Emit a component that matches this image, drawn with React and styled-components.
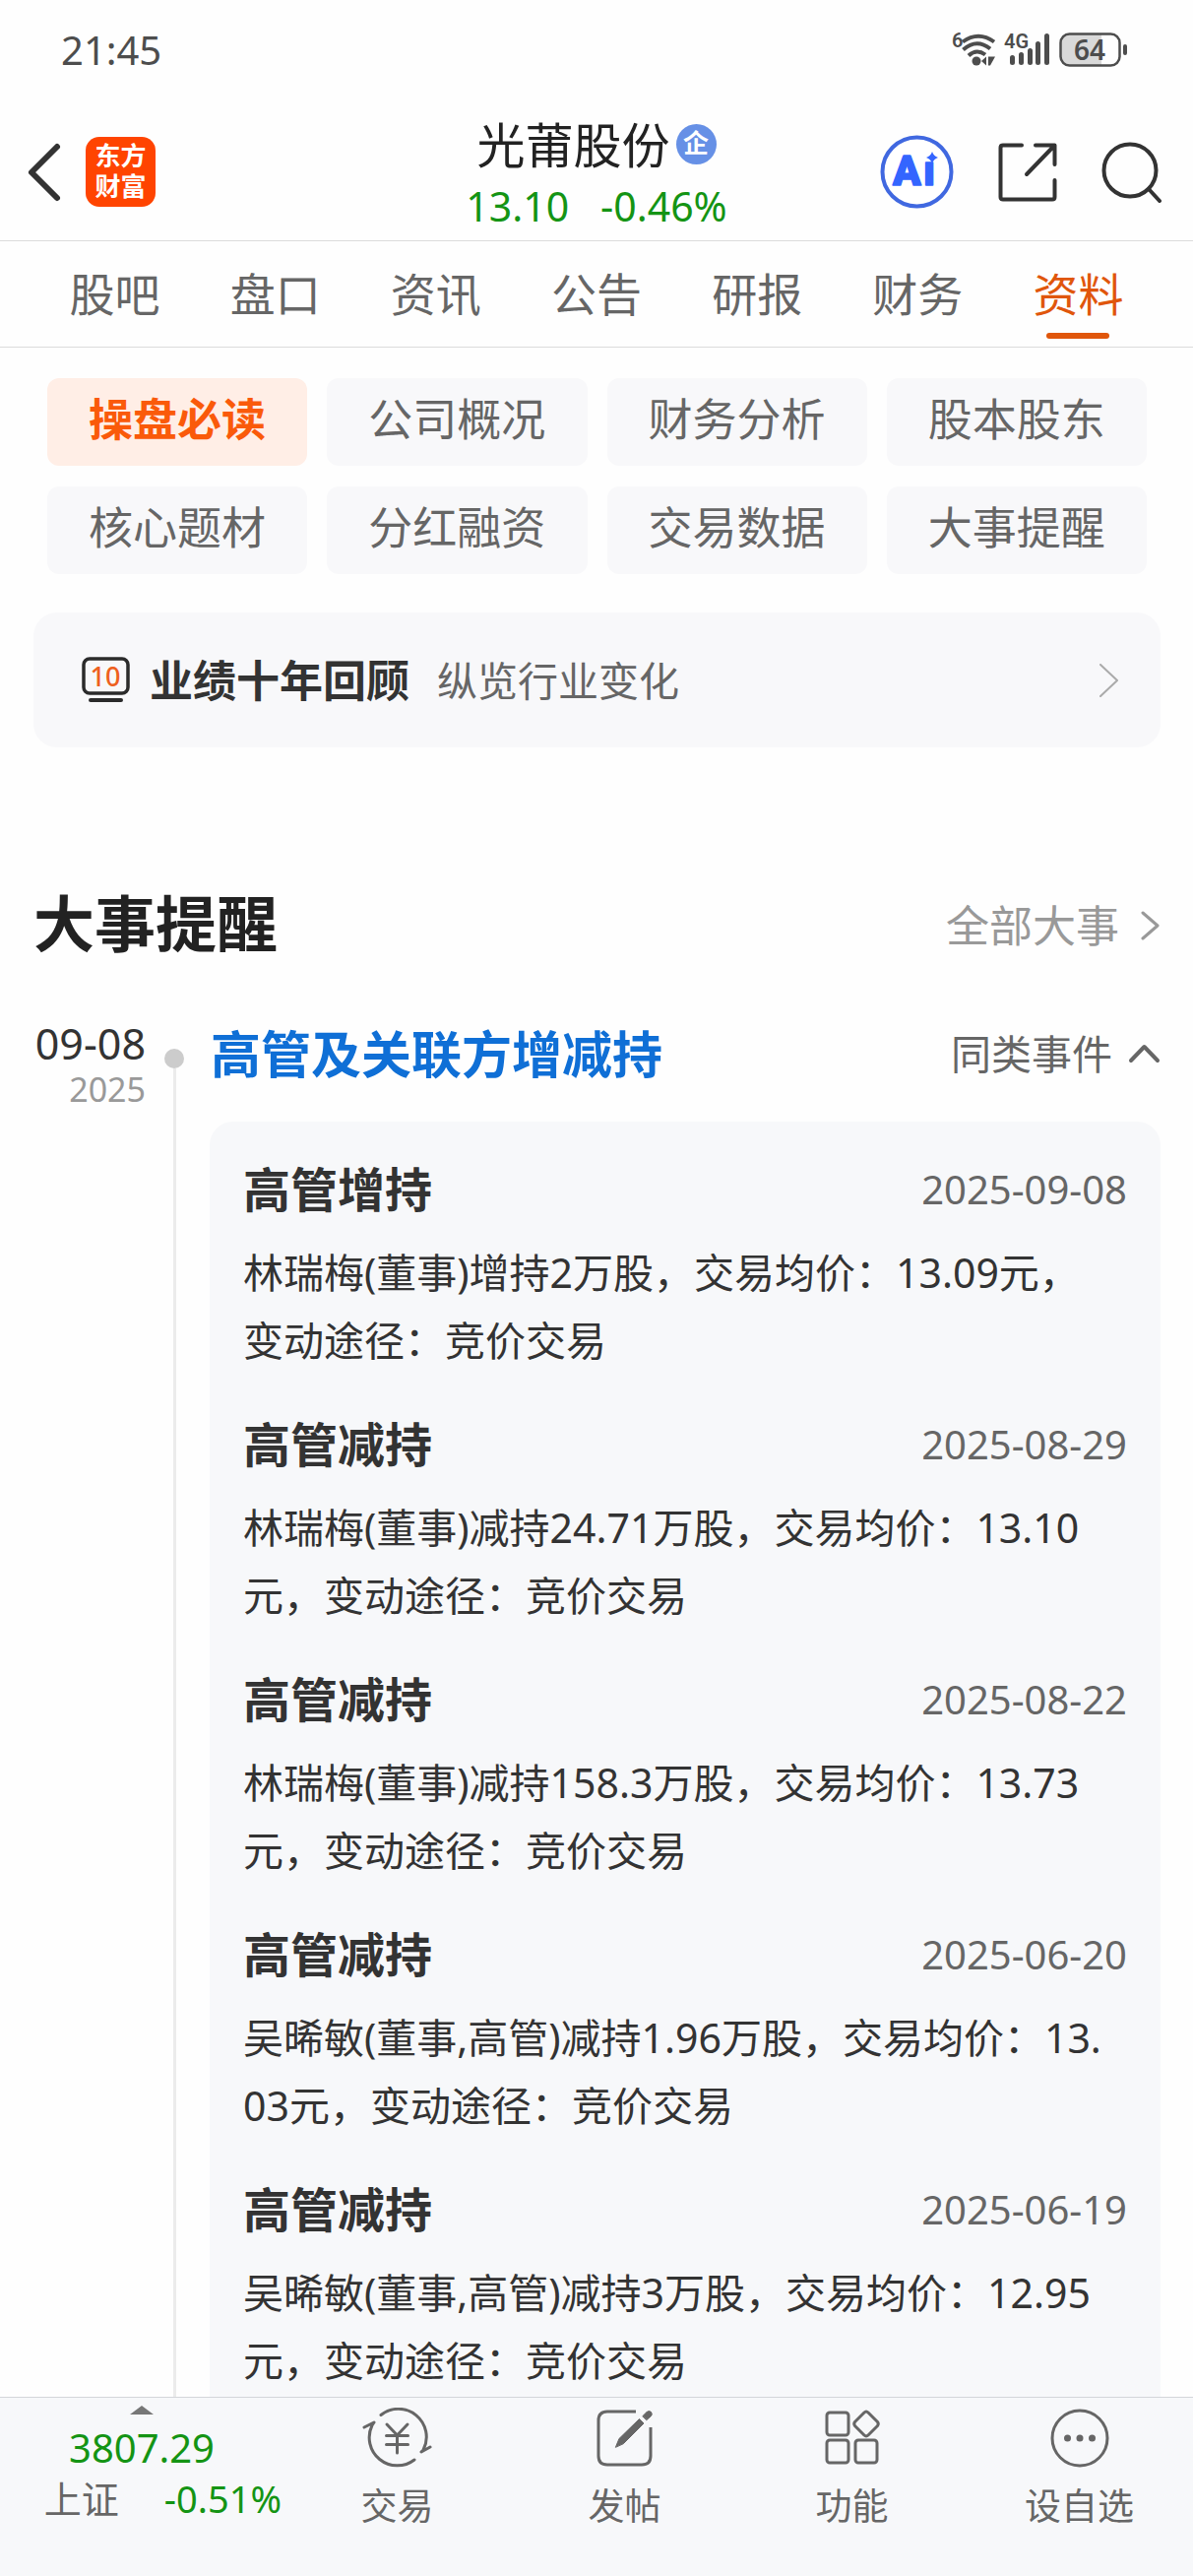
import styled, { createGlobalStyle } from "styled-components";

const GlobalStyle = createGlobalStyle`
  * {
    box-sizing: border-box;
  }
  body {
    margin: 0;
    background: #fefefe;
    color: #333;
    font-family: "Noto Sans", "Noto Sans CJK SC", sans-serif;
  }
  h1, h2, h3, p {
    margin: 0;
  }
  button {
    border: 0;
    padding: 0;
    background: none;
    color: inherit;
    font: inherit;
    cursor: pointer;
  }
  a {
    color: inherit;
    text-decoration: none;
  }
  svg {
    display: block;
    flex: none;
  }
`;

const Page = styled.div`
  height: 100vh;
  display: flex;
  flex-direction: column;
`;

const StatusBar = styled.div`
  height: 101px;
  flex: none;
  display: flex;
  align-items: center;
  justify-content: space-between;
  padding: 0 66px 0 62px;
  color: #4d4d4d;
`;
const Clock = styled.span`
  font-size: 40px;
  line-height: 48px;
`;
const StatusIcons = styled.div`
  display: flex;
  align-items: center;
  gap: 8px;
`;

const TopBar = styled.header`
  height: 144px;
  flex: none;
  display: grid;
  grid-template-columns: 1fr auto 1fr;
  align-items: center;
  padding: 4px 31px 0 27px;
  border-bottom: 1px solid #dcdcdc;
  color: #333;
`;
const TopGroup = styled.div`
  display: flex;
  align-items: center;
  gap: ${(props) => props.$gap}px;
  justify-content: ${(props) => (props.$end ? "flex-end" : "flex-start")};
`;
const BrandLogo = styled.a`
  width: 71px;
  height: 71px;
  border-radius: 14px;
  background: #ff4400;
  color: #fff;
  font-size: 26px;
  font-weight: 700;
  line-height: 31px;
  text-align: center;
  padding: 4px 8px;
  word-break: break-all;
`;
const StockTitle = styled.div`
  display: flex;
  flex-direction: column;
  align-items: center;
  padding: 4px 0 0 4px;
`;
const StockName = styled.h1`
  display: flex;
  align-items: center;
  gap: 6px;
  color: #222;
  font-size: 49px;
  font-weight: 400;
  line-height: 64px;
`;
const Badge = styled.span`
  width: 41px;
  height: 41px;
  border-radius: 50%;
  background: #6690e6;
  color: #fff;
  font-size: 26px;
  font-weight: 700;
  line-height: 38px;
  text-align: center;
`;
const StockPrice = styled.div`
  display: flex;
  gap: 32px;
  color: #149414;
  font-size: 41px;
  line-height: 60px;
`;

const Tabs = styled.nav`
  height: 108px;
  flex: none;
  display: flex;
  padding: 0 35px;
  border-bottom: 1px solid #dcdcdc;
`;
const Tab = styled.a`
  position: relative;
  flex: 1;
  text-align: center;
  font-size: 46px;
  line-height: 106px;
  color: ${(props) => (props.$active ? "#e0560b" : "#666")};
  &::after {
    content: "";
    display: ${(props) => (props.$active ? "block" : "none")};
    position: absolute;
    bottom: 8px;
    left: 50%;
    margin-left: -32px;
    width: 64px;
    height: 6px;
    border-radius: 3px;
    background: #e0560b;
  }
`;

const Content = styled.main`
  flex: 1;
  min-height: 0;
  overflow-y: auto;
  scrollbar-width: none;
  padding: 31px 33px 0 34px;
`;
const ChipGrid = styled.div`
  display: grid;
  grid-template-columns: repeat(4, 1fr);
  gap: 21px 20px;
  padding: 0 14px;
`;
const Chip = styled.button`
  height: 89px;
  padding-bottom: 5px;
  border-radius: 12px;
  font-size: 45px;
  line-height: 60px;
  font-weight: ${(props) => (props.$active ? 700 : 400)};
  color: ${(props) => (props.$active ? "#fa5a0a" : "#666")};
  background: ${(props) => (props.$active ? "#ffeee6" : "#f8f8fa")};
`;

const Banner = styled.a`
  display: flex;
  align-items: center;
  height: 137px;
  margin-top: 39px;
  padding: 0 42px 0 49px;
  border-radius: 24px;
  background: #f8f8fa;
`;
const BannerTitle = styled.strong`
  margin-left: 20px;
  font-size: 44px;
  line-height: 60px;
`;
const BannerText = styled.span`
  flex: 1;
  margin-left: 28px;
  color: #666;
  font-size: 41px;
  line-height: 60px;
`;

const SectionHead = styled.div`
  display: flex;
  align-items: center;
  justify-content: space-between;
  margin-top: 143px;
`;
const SectionTitle = styled.h2`
  color: #222;
  font-size: 62px;
  line-height: 72px;
`;
const MoreLink = styled.a`
  display: flex;
  align-items: center;
  gap: 22px;
  padding-top: 4px;
  color: #999;
  font-size: 44px;
  line-height: 60px;
`;

const Timeline = styled.section`
  display: flex;
  margin-top: 60px;
`;
const DateColumn = styled.time`
  width: 114px;
  flex: none;
  display: flex;
  flex-direction: column;
  align-items: flex-end;
`;
const DateDay = styled.span`
  font-size: 43px;
  line-height: 52px;
`;
const DateYear = styled.span`
  color: #999;
  font-size: 34px;
  line-height: 40px;
`;
const Rail = styled.div`
  flex: none;
  display: flex;
  flex-direction: column;
  align-items: center;
  width: 20px;
  margin: 31px 26px 0 19px;
`;
const Dot = styled.span`
  width: 20px;
  height: 20px;
  border-radius: 50%;
  background: #ccc;
`;
const Line = styled.span`
  flex: 1;
  width: 3px;
  background: #ebebeb;
`;
const EventBody = styled.div`
  flex: 1;
`;
const EventHead = styled.div`
  display: flex;
  align-items: center;
  justify-content: space-between;
`;
const EventTitle = styled.h3`
  padding-left: 1px;
  color: #0f6fd6;
  font-size: 51px;
  line-height: 72px;
`;
const Toggle = styled.button`
  display: flex;
  align-items: center;
  gap: 16px;
  color: #666;
  font-size: 41px;
  line-height: 60px;
`;
const Card = styled.div`
  display: flex;
  flex-direction: column;
  gap: 37px;
  margin-top: 33px;
  padding: 35px 34px;
  border-radius: 24px;
  background: #f7f8fa;
`;
const RecordHead = styled.div`
  display: flex;
  align-items: center;
  justify-content: space-between;
  line-height: 68px;
`;
const RecordTitle = styled.strong`
  font-size: 48px;
`;
const RecordDate = styled.time`
  color: #666;
  font-size: 40px;
`;
const RecordText = styled.p`
  margin-top: 16px;
  padding-right: 14px;
  font-size: 41px;
  line-height: 69px;
  word-break: break-all;
`;

const BottomBar = styled.footer`
  height: 182px;
  flex: none;
  display: flex;
  padding-top: 8px;
  border-top: 1px solid #d4d6da;
  background: #f7f8fa;
  color: #666;
`;
const IndexPanel = styled.button`
  width: 288px;
  flex: none;
  display: flex;
  flex-direction: column;
  align-items: center;
`;
const IndexValue = styled.span`
  margin-top: 8px;
  color: #149414;
  font-size: 40px;
  line-height: 52px;
`;
const IndexRow = styled.span`
  align-self: flex-end;
  display: flex;
  gap: 46px;
  padding-right: 2px;
  font-size: 38px;
  line-height: 50px;
`;
const Green = styled.span`
  color: #149414;
`;
const Action = styled.button`
  flex: 1;
  display: flex;
  flex-direction: column;
  align-items: center;
  gap: 12px;
  padding-top: 2px;
  font-size: 37px;
  line-height: 52px;
`;

const Stroke = ({ w, h, width = 4, color = "currentColor", children }) => (
  <svg
    width={w}
    height={h}
    viewBox={`0 0 ${w} ${h}`}
    fill="none"
    stroke={color}
    strokeWidth={width}
    strokeLinecap="round"
    strokeLinejoin="round"
    aria-hidden="true"
  >
    {children}
  </svg>
);

const WifiIcon = () => (
  <svg width="46" height="46" viewBox="0 -5 46 46" fill="#4d4d4d">
    <text x="1" y="15" fontSize="20" fontWeight="600" fontFamily="Roboto">
      6
    </text>
    <g fill="none" stroke="#4d4d4d" strokeWidth="4">
      <path d="M12 9.500Q28 -2 44 9.500" />
      <path d="M12.500 17.500Q26 5.500 40 16.500" />
      <path d="M18 23.500Q26 16 35 22.500" />
    </g>
    <circle cx="26" cy="29" r="4.500" />
    <path d="M36 24.500v9l-5-4.500zM38 24.500h7l-5 9h-2z" />
  </svg>
);

const SignalIcon = () => (
  <svg width="48" height="46" viewBox="0 -5 48 46" fill="#4d4d4d">
    <text x="0" y="16" fontSize="20" fontWeight="600" fontFamily="Roboto">
      4G
    </text>
    <rect x="6" y="23" width="5" height="10" rx="2.500" />
    <rect x="15" y="20" width="5" height="13" rx="2.500" />
    <rect x="24" y="16" width="5" height="17" rx="2.500" />
    <rect x="32" y="9" width="5" height="24" rx="2.500" />
    <rect x="41" y="1" width="5" height="32" rx="2.500" />
  </svg>
);

const BatteryIcon = () => (
  <svg width="70" height="46" viewBox="0 -5 70 46">
    <path d="M11 2H43V34H11Q2 34 2 25V11Q2 2 11 2Z" fill="#d9d9d9" />
    <rect
      x="1.500"
      y="1.500"
      width="60"
      height="32"
      rx="9"
      fill="none"
      stroke="#4d4d4d"
      strokeWidth="2.500"
    />
    <rect x="65" y="12" width="4" height="11" rx="2" fill="#4d4d4d" />
    <text
      x="31"
      y="28"
      fontSize="28"
      fontWeight="600"
      textAnchor="middle"
      fill="#4d4d4d"
    >
      64
    </text>
  </svg>
);

const AiIcon = () => (
  <svg width="75" height="75" viewBox="0 0 75 75" fill="#3465ff">
    <circle
      cx="37.500"
      cy="37.500"
      r="35"
      fill="#fff"
      stroke="#4068e0"
      strokeWidth="4"
    />
    <text
      y="51"
      fontSize="42"
      fontWeight="900"
      fontFamily="Roboto"
      stroke="#3465ff"
      strokeWidth="1.500"
      strokeLinejoin="round"
    >
      <tspan x="13">A</tspan>
      <tspan x="44">ı</tspan>
    </text>
    <path d="M53 17Q54.500 21.500 59 23Q54.500 24.500 53 29Q51.500 24.500 47 23Q51.500 21.500 53 17Z" />
  </svg>
);

const ShareIcon = () => (
  <Stroke w={60} h={60} width={4}>
    <path d="M24 2.500H5Q2.500 2.500 2.500 5V55Q2.500 57.500 5 57.500H55Q57.500 57.500 57.500 55V38" />
    <path d="M38 2.500H57.500V22M57 3L29 32" />
  </Stroke>
);

const SearchIcon = () => (
  <Stroke w={62} h={62} width={4}>
    <circle cx="29" cy="29" r="26.500" />
    <path d="M48 48L59 60" />
  </Stroke>
);

const BannerIcon = () => (
  <svg width="49" height="47" viewBox="0 0 49 47">
    <rect
      x="2"
      y="2"
      width="45"
      height="35"
      rx="6"
      fill="none"
      stroke="#2b2b2b"
      strokeWidth="3.500"
    />
    <path d="M9 44H40" stroke="#2b2b2b" strokeWidth="4" strokeLinecap="round" />
    <text
      x="24"
      y="30"
      fontSize="27"
      fontWeight="500"
      textAnchor="middle"
      fill="#ee6020"
    >
      10
    </text>
  </svg>
);

const TradeIcon = () => (
  <Stroke w={71} h={62} width={3}>
    <path d="M19 7.500A28.500 28.500 0 0 1 62 43L60 45L69 40" />
    <path d="M53 53A28.500 28.500 0 0 1 10 18L12 15L2 20" />
    <path d="M25 17L35.500 28L46 17M35.500 28V46M24.500 28.500H46.500M24.500 37.500H46.500" />
  </Stroke>
);

const PostIcon = () => (
  <Stroke w={60} h={62} width={3}>
    <path
      d="M41 4H12Q3 4 3 13V49Q3 58 12 58H47Q56 58 56 49V20"
      strokeLinecap="butt"
    />
    <path
      d="M20.500 40L24 31.500L44.500 11.500L49 16L28.500 36.500Z"
      fill="currentColor"
      strokeWidth="1"
    />
    <path
      d="M48 8.500L52 4.500Q54.500 2.500 56.500 4.500Q58 6.500 56.500 8.500L52 12.500Z"
      fill="currentColor"
      strokeWidth="1"
    />
  </Stroke>
);

const AppsIcon = () => (
  <Stroke w={58} h={62} width={3}>
    <rect x="3" y="5" width="22" height="23" rx="3" />
    <rect x="3" y="33" width="22" height="23" rx="3" />
    <rect x="32" y="33" width="22" height="23" rx="3" />
    <path d="M41 5Q43 3 45 5L54.500 14.500Q56 16.500 54.500 18.500L45 28Q43 30 41 28L31.500 18.500Q30 16.500 31.500 14.500Z" />
  </Stroke>
);

const MoreIcon = () => (
  <Stroke w={62} h={62} width={3}>
    <circle cx="31" cy="31" r="28" />
    <g fill="currentColor" stroke="none">
      <circle cx="18.500" cy="31" r="3.500" />
      <circle cx="31" cy="31" r="3.500" />
      <circle cx="43.500" cy="31" r="3.500" />
    </g>
  </Stroke>
);

const tabs = ["股吧", "盘口", "资讯", "公告", "研报", "财务", "资料"];

const chips = [
  "操盘必读",
  "公司概况",
  "财务分析",
  "股本股东",
  "核心题材",
  "分红融资",
  "交易数据",
  "大事提醒",
];

const records = [
  {
    title: "高管增持",
    date: "2025-09-08",
    text: "林瑞梅(董事)增持2万股，交易均价：13.09元，变动途径：竞价交易",
  },
  {
    title: "高管减持",
    date: "2025-08-29",
    text: "林瑞梅(董事)减持24.71万股，交易均价：13.10元，变动途径：竞价交易",
  },
  {
    title: "高管减持",
    date: "2025-08-22",
    text: "林瑞梅(董事)减持158.3万股，交易均价：13.73元，变动途径：竞价交易",
  },
  {
    title: "高管减持",
    date: "2025-06-20",
    text: "吴晞敏(董事,高管)减持1.96万股，交易均价：13.03元，变动途径：竞价交易",
  },
  {
    title: "高管减持",
    date: "2025-06-19",
    text: "吴晞敏(董事,高管)减持3万股，交易均价：12.95元，变动途径：竞价交易",
  },
];

const actions = [
  { label: "交易", Icon: TradeIcon },
  { label: "发帖", Icon: PostIcon },
  { label: "功能", Icon: AppsIcon },
  { label: "设自选", Icon: MoreIcon },
];

const App = () => (
  <Page lang="zh-CN">
    <GlobalStyle />
    <StatusBar>
      <Clock>21:45</Clock>
      <StatusIcons>
        <WifiIcon />
        <SignalIcon />
        <BatteryIcon />
      </StatusIcons>
    </StatusBar>

    <TopBar>
      <TopGroup $gap={24}>
        <button aria-label="返回">
          <Stroke w={36} h={62} width={6}>
            <path d="M31 5L5 31L31 57" />
          </Stroke>
        </button>
        <BrandLogo href="#home">东方财富</BrandLogo>
      </TopGroup>
      <StockTitle>
        <StockName>
          光莆股份<Badge>企</Badge>
        </StockName>
        <StockPrice>
          <span>13.10</span>
          <span>-0.46%</span>
        </StockPrice>
      </StockTitle>
      <TopGroup $gap={45} $end>
        <button aria-label="AI">
          <AiIcon />
        </button>
        <button aria-label="分享">
          <ShareIcon />
        </button>
        <button aria-label="搜索">
          <SearchIcon />
        </button>
      </TopGroup>
    </TopBar>

    <Tabs>
      {tabs.map((tab) => (
        <Tab key={tab} href={`#${tab}`} $active={tab === "资料"}>
          {tab}
        </Tab>
      ))}
    </Tabs>

    <Content>
      <ChipGrid>
        {chips.map((chip) => (
          <Chip key={chip} $active={chip === "操盘必读"}>
            {chip}
          </Chip>
        ))}
      </ChipGrid>

      <Banner href="#review">
        <BannerIcon />
        <BannerTitle>业绩十年回顾</BannerTitle>
        <BannerText>纵览行业变化</BannerText>
        <Stroke w={20} h={34} width={2} color="#aaa">
          <path d="M1 1L18 17L1 33" />
        </Stroke>
      </Banner>

      <SectionHead>
        <SectionTitle>大事提醒</SectionTitle>
        <MoreLink href="#events">
          全部大事
          <Stroke w={20} h={30} width={3}>
            <path d="M2 2L17 15L2 28" />
          </Stroke>
        </MoreLink>
      </SectionHead>

      <Timeline>
        <DateColumn dateTime="2025-09-08">
          <DateDay>09-08</DateDay>
          <DateYear>2025</DateYear>
        </DateColumn>
        <Rail>
          <Dot />
          <Line />
        </Rail>
        <EventBody>
          <EventHead>
            <EventTitle>高管及关联方增减持</EventTitle>
            <Toggle aria-expanded="true">
              同类事件
              <Stroke w={33} h={20} width={4}>
                <path d="M3 17L16.500 3L30 17" />
              </Stroke>
            </Toggle>
          </EventHead>
          <Card>
            {records.map(({ title, date, text }) => (
              <article key={date}>
                <RecordHead>
                  <RecordTitle>{title}</RecordTitle>
                  <RecordDate dateTime={date}>{date}</RecordDate>
                </RecordHead>
                <RecordText>{text}</RecordText>
              </article>
            ))}
          </Card>
        </EventBody>
      </Timeline>
    </Content>

    <BottomBar>
      <IndexPanel>
        <svg width="24" height="9" viewBox="0 0 24 9">
          <path d="M0 9L12 0L24 9Z" fill="#777" />
        </svg>
        <IndexValue>3807.29</IndexValue>
        <IndexRow>
          上证<Green>-0.51%</Green>
        </IndexRow>
      </IndexPanel>
      {actions.map(({ label, Icon }) => (
        <Action key={label}>
          <Icon />
          {label}
        </Action>
      ))}
    </BottomBar>
  </Page>
);

export default App;
